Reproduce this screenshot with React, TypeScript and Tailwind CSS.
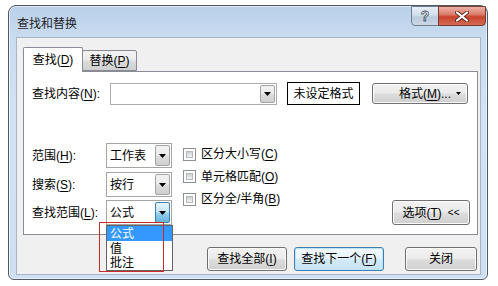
import React from "react";

const btnFace =
  "border border-[#707070] bg-[linear-gradient(#f2f2f2_0%,#ebebeb_48%,#dddddd_52%,#cfcfcf_100%)] shadow-[inset_0_0_0_1px_#fbfbfb]";

function Key({ k }: { k: string }) {
  return (
    <>
      (<span className="underline underline-offset-[2px]">{k}</span>)
    </>
  );
}

function Arrow({ hot }: { hot?: boolean }) {
  return (
    <div
      className={
        hot
          ? "flex h-full w-[15px] items-center justify-center rounded-[2px] border border-[#3c7fb1] bg-[linear-gradient(#e5f4fc_0%,#c4e5f6_48%,#98d1ef_52%,#68b3db_100%)]"
          : "flex h-full w-[15px] items-center justify-center rounded-[2px] border border-[#a3a3a3] bg-[linear-gradient(#f2f2f2_0%,#ebebeb_48%,#dddddd_52%,#cfcfcf_100%)]"
      }
    >
      <svg width="7" height="4" viewBox="0 0 7 4">
        <path d="M0 0h7L3.5 4z" fill="#000" />
      </svg>
    </div>
  );
}

function Select({ value, hot }: { value: string; hot?: boolean }) {
  return (
    <div className="flex h-[25px] w-[66px] items-center border border-[#a5a5a5] bg-white py-[1px] pl-[3px] pr-[1px]">
      <span className="flex-1">{value}</span>
      <Arrow hot={hot} />
    </div>
  );
}

function Check({ label, k }: { label: string; k: string }) {
  return (
    <div className="flex items-center gap-[5px]">
      <div className="h-[13px] w-[13px] border border-[#8e8f8f] bg-white p-[2px]">
        <div className="h-full w-full border border-[#b4b8bd] bg-[linear-gradient(#cbcfd5,#f4f4f4)]" />
      </div>
      <span>
        {label}
        <Key k={k} />
      </span>
    </div>
  );
}

function Row({ label, k, value, hot }: { label: string; k: string; value: string; hot?: boolean }) {
  return (
    <div className="flex h-[25px] items-center">
      <span className="w-[74px]">
        {label}
        <Key k={k} />:
      </span>
      <Select value={value} hot={hot} />
    </div>
  );
}

export default function App() {
  return (
    <div className="relative h-[286px] w-[498px] overflow-hidden bg-white pl-[8px] pt-[5px] font-['Liberation_Sans','Noto_Sans_CJK_SC',sans-serif] text-[12px] leading-[16px] text-black">
      <div className="flex h-[275px] w-[480px] flex-col rounded-t-[8px] rounded-b-[6px] border border-[#4f5a66] bg-[linear-gradient(180deg,#b9d0ea_0%,#cadcf0_12%,#d3e2f3_40%,#cfdff1_100%)] shadow-[inset_0_0_0_1px_rgba(255,255,255,0.55)]">
        {/* title bar */}
        <div className="flex h-[31px] shrink-0 items-start justify-between">
          <div className="pl-[8px] pt-[11px] leading-[14px] text-[#1e1e1e]">查找和替换</div>
          <div className="mr-[1px] flex">
            <div className="flex h-[20px] w-[28px] items-center justify-center rounded-bl-[4px] border border-[#6f7f90] bg-[linear-gradient(#e6eef6_0%,#d2deeb_45%,#bccbdc_55%,#c9d7e6_100%)] text-[14px] font-bold leading-none text-[#eef3f8] [-webkit-text-stroke:0.8px_#485767]">
              ?
            </div>
            <div className="-ml-px flex h-[20px] w-[48px] items-center justify-center rounded-br-[4px] border border-[#7a3a32] bg-[linear-gradient(#eab1a5_0%,#dc7f6e_40%,#c8442e_55%,#d56a52_100%)]">
              <svg width="14" height="11" viewBox="0 0 14 11">
                <path d="M2 1.5L12 9.5M12 1.5L2 9.5" stroke="#5b2a24" strokeWidth="4" strokeLinecap="round" />
                <path d="M2 1.5L12 9.5M12 1.5L2 9.5" stroke="#fff" strokeWidth="2.2" strokeLinecap="round" />
              </svg>
            </div>
          </div>
        </div>

        {/* client area */}
        <div className="mb-[4px] ml-[7px] mr-[6px] flex flex-1 flex-col border border-[#a7b6c6] bg-[#f0f0f0]">
          {/* tabs */}
          <div className="flex items-end pl-[6px] pt-[9px]">
            <div className="relative z-10 -mb-px flex h-[25px] w-[60px] items-center justify-center rounded-t-[2px] border border-b-0 border-[#898c95] bg-white">
              <span>
                查找<Key k="D" />
              </span>
            </div>
            <div className="-ml-px flex h-[21px] w-[55px] items-center justify-center rounded-t-[2px] border border-[#898c95] bg-[linear-gradient(#f2f2f2_0%,#ebebeb_48%,#dddddd_52%,#cfcfcf_100%)]">
              <span>
                替换<Key k="P" />
              </span>
            </div>
          </div>

          {/* panel */}
          <div className="ml-[6px] mr-[2px] h-[164px] border border-[#898c95] bg-white pl-[8px] pt-[10px]">
            <div className="flex h-[23px] items-center">
              <span className="w-[78px]">
                查找内容<Key k="N" />:
              </span>
              <div className="flex h-[22px] w-[167px] items-center border border-[#abadb3] bg-white py-[1px] pr-[1px]">
                <span className="flex-1" />
                <Arrow />
              </div>
              <div className="ml-[10px] flex h-[23px] w-[73px] items-center justify-center border border-black">
                未设定格式
              </div>
              <div className={`ml-[12px] flex h-[21px] w-[96px] items-center rounded-[3px] pl-[26px] pr-[6px] ${btnFace}`}>
                <span className="flex-1">
                  格式<Key k="M" />...
                </span>
                <svg width="5" height="3" viewBox="0 0 5 3">
                  <path d="M0 0h5L2.5 3z" fill="#000" />
                </svg>
              </div>
            </div>

            <div className="mt-[38px] flex pr-[7px]">
              <div className="flex flex-col">
                <Row label="范围" k="H" value="工作表" />
                <div className="mt-[4px]">
                  <Row label="搜索" k="S" value="按行" />
                </div>
                <div className="mt-[3px]">
                  <Row label="查找范围" k="L" value="公式" hot />
                </div>
              </div>
              <div className="ml-[11px] flex flex-col">
                <div className="flex h-[22px] items-center">
                  <Check label="区分大小写" k="C" />
                </div>
                <div className="flex h-[23px] items-center">
                  <Check label="单元格匹配" k="O" />
                </div>
                <div className="flex h-[22px] items-center">
                  <Check label="区分全/半角" k="B" />
                </div>
              </div>
              <div className="flex-1" />
              <div className={`flex h-[25px] w-[78px] items-center justify-center gap-[6px] self-end rounded-[3px] ${btnFace}`}>
                <span>
                  选项<Key k="T" />
                </span>
                <span className="text-[10px]">&lt;&lt;</span>
              </div>
            </div>
          </div>

          {/* bottom buttons */}
          <div className="mt-[12px] flex justify-end pr-[3px]">
            <div className={`flex h-[24px] w-[80px] items-center justify-center rounded-[3px] ${btnFace}`}>
              <span>
                查找全部<Key k="I" />
              </span>
            </div>
            <div className="ml-[7px] flex h-[24px] w-[90px] items-center justify-center rounded-[3px] border border-[#3c7fb1] bg-[linear-gradient(#f2f9fd_0%,#e6f3fb_48%,#d4eaf7_52%,#c6e2f3_100%)] shadow-[inset_0_0_0_1px_#bfe4f8]">
              <span>
                查找下一个<Key k="F" />
              </span>
            </div>
            <div className={`ml-[21px] flex h-[24px] w-[72px] items-center justify-center rounded-[3px] ${btnFace}`}>
              关闭
            </div>
          </div>
        </div>
      </div>

      {/* dropdown list overlay */}
      <div className="absolute left-[106px] top-[225px] flex w-[67px] flex-col border border-[#646464] bg-white">
        <div className="flex h-[15px] items-center bg-[#3399ff] pl-[3px] text-white">公式</div>
        <div className="flex h-[15px] items-center pl-[3px]">值</div>
        <div className="flex h-[14px] items-center pl-[3px]">批注</div>
      </div>
      {/* red annotation box */}
      <div className="absolute left-[99px] top-[222px] h-[50px] w-[65px] border border-[#cc2b2b]" />
    </div>
  );
}
